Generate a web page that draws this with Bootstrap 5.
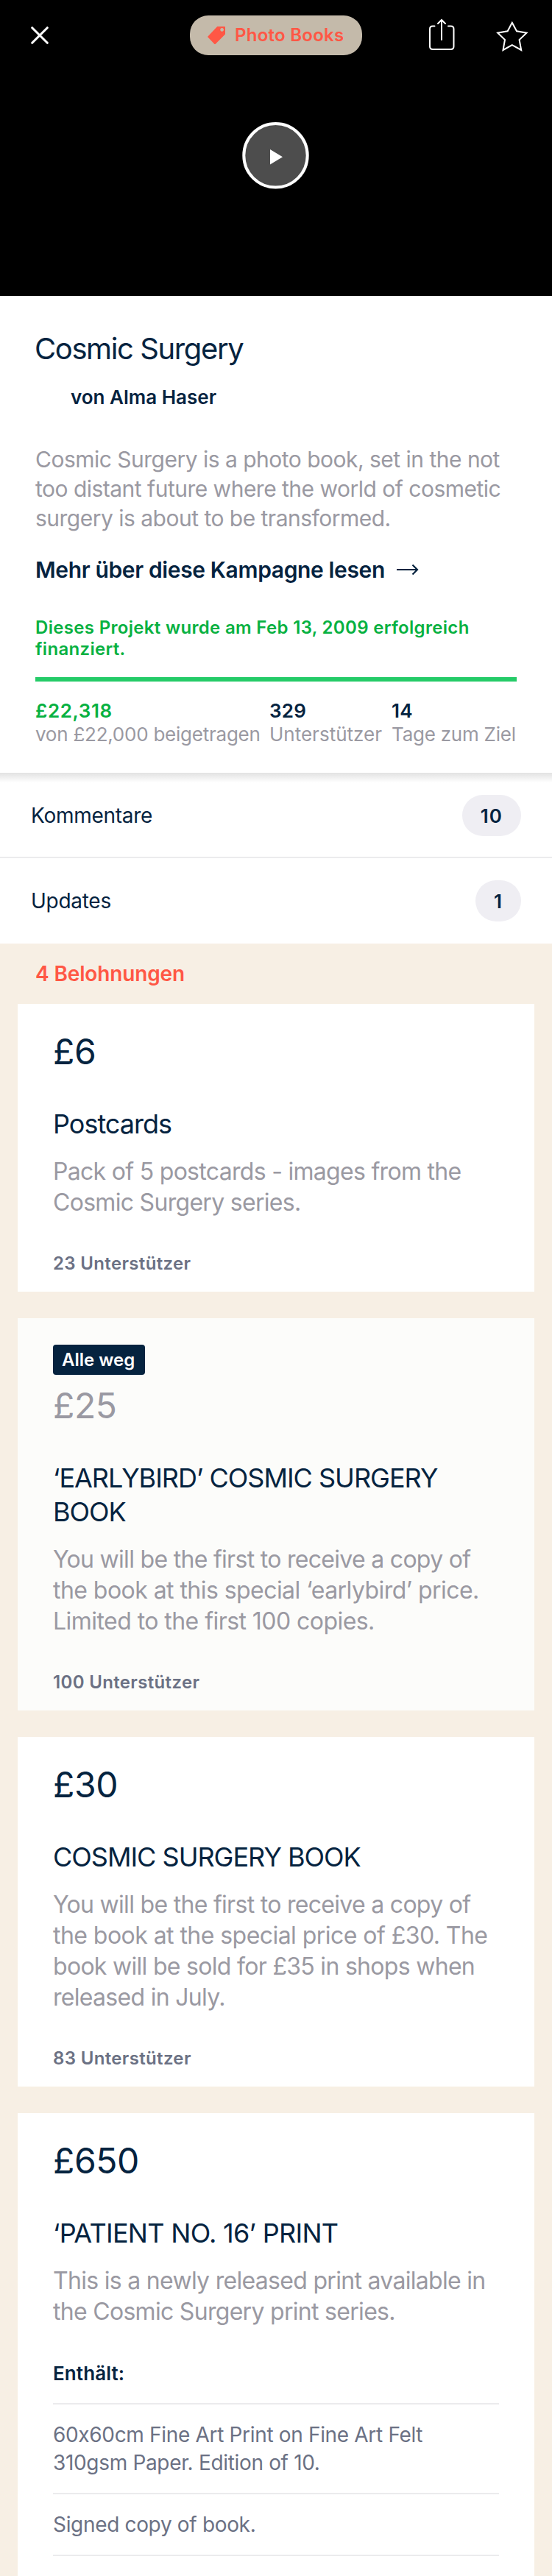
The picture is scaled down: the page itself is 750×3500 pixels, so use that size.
<!DOCTYPE html>
<html lang="de">
<head>
<meta charset="utf-8">
<meta name="viewport" content="width=device-width, initial-scale=1">
<title>Cosmic Surgery</title>
<link href="https://cdn.jsdelivr.net/npm/bootstrap@5.3.0/dist/css/bootstrap.min.css" rel="stylesheet">
<style>
  :root { --navy: #05233f; --soft: #9a99a2; --slate: #6b7184; --coral: #ff5745; --line: #ebebed; }
  body { font-family: Inter, "Liberation Sans", sans-serif; color: var(--navy); height: 3500px; overflow: hidden; background: #f7efe4; font-kerning: normal; }
  p, h1, h2, h3 { margin: 0; font-weight: 400; }
  svg { display: block; }

  .hero { height: 402px; background: #000; }
  .hero-bar { padding: 21px 30px 0; }
  .side { flex: 1 1 0; }
  .close-icon { margin-left: 12px; }
  .category { width: 234px; height: 54px; border-radius: 25px; background: #c4baaa; color: var(--coral); font-size: 24px; font-weight: 600; letter-spacing: .26px; padding-left: 24px; gap: 13px; }
  .play { margin: 91px auto 0; width: 92px; }

  .campaign { padding: 48px 48px 36px; }
  .campaign h1 { font-size: 40px; line-height: 48px; letter-spacing: -1.4px; margin-left: -1px; }
  .author { font-size: 26px; line-height: 32px; font-weight: 600; margin: 26px 0 48px 48px; }
  .blurb { font-size: 30px; line-height: 40px; letter-spacing: -.51px; color: var(--soft); }
  .more { font-size: 30px; line-height: 40px; font-weight: 600; letter-spacing: -.36px; margin-top: 30px; gap: 16px; }
  .success { font-size: 24px; line-height: 29px; font-weight: 600; letter-spacing: .32px; color: #07b141; margin: 44px 0 24px; }
  .funded.progress { height: 6px; border-radius: 0; margin-bottom: 24px; }
  .funded .progress-bar { background: #25cb68; }
  .stats { display: grid; grid-template-columns: 318px 166px auto; font-size: 26px; line-height: 32px; color: var(--soft); white-space: nowrap; }
  .stats strong { display: block; font-weight: 600; color: var(--navy); letter-spacing: .3px; }
  .stats .pledged { color: #07b141; letter-spacing: .6px; }
  .ls-a { letter-spacing: -.24px; }

  .links .entry { height: 116px; padding: 0 42px; font-size: 28px; letter-spacing: -.28px; background: #fff; }
  .links .entry:first-child { border-bottom: 2px solid var(--line); padding-top: 2px; background: linear-gradient(#e2e2e2 0, #f3f3f3 8px, #fff 13px); }
  .count { min-width: 62px; height: 56px; border-radius: 28px; background: #efeef3; font-size: 26px; font-weight: 600; letter-spacing: 1px; padding: 0 25px; }

  .rewards-head { height: 82px; padding: 2px 0 0 48px; font-size: 28px; font-weight: 600; letter-spacing: -.14px; color: var(--coral); }
  .reward { background: #fff; margin: 0 24px 36px; padding: 37px 48px 23px; }
  .reward.gone { background: #fcfcfa; padding-top: 36px; }
  .gone-tag { display: table; height: 41px; line-height: 41px; border-radius: 4px; background: var(--navy); color: #fff; font-size: 24px; font-weight: 600; padding: 0 14px 0 12px; margin-bottom: 14px; }
  .price { font-size: 48px; line-height: 56px; letter-spacing: -.42px; }
  .gone .price { color: var(--soft); }
  .reward h3 { font-size: 36px; line-height: 46px; letter-spacing: -1px; margin: 47px -24px 21px 0; }
  .reward h3.loose { letter-spacing: -.7px; }
  .reward .about { font-size: 32px; line-height: 42px; letter-spacing: -.7px; color: var(--soft); margin-right: -24px; }
  .reward .about .wide { letter-spacing: -.55px; }
  .backers { font-size: 24px; line-height: 30px; font-weight: 600; letter-spacing: .34px; color: var(--slate); margin-top: 47px; }
  .contains { font-size: 26px; line-height: 30px; font-weight: 600; letter-spacing: .1px; margin: 48px 0 25px; }
  .items li { border-top: 2px solid var(--line); padding: 22px 0; font-size: 28px; line-height: 38px; letter-spacing: -.33px; color: var(--slate); }
  .items { border-bottom: 2px solid var(--line); margin: 0; }
</style>
</head>
<body>
<header class="hero">
  <div class="hero-bar d-flex align-items-center">
    <div class="side">
      <svg class="close-icon" width="24" height="24" viewBox="0 0 24 24" fill="none" stroke="#fff" stroke-width="3" stroke-linecap="round"><path d="M1.7 1.7l20.6 20.6M22.3 1.7L1.7 22.3"/></svg>
    </div>
    <div class="category d-flex align-items-center flex-shrink-0">
      <svg width="24" height="24" viewBox="0 0 24 24"><path fill="#ff5745" fill-rule="evenodd" d="M0 14 13.200 0H23q1 0 1 1v9.500L10.500 24H9.500zM19.600 2a2.400 2.400 0 1 0 .01 0z"/></svg>
      <span>Photo Books</span>
    </div>
    <div class="side d-flex justify-content-end">
      <svg width="138" height="46" viewBox="582 25 138 46" fill="none" stroke="#fff" stroke-width="2" stroke-linecap="round">
        <path d="M590.500 35.500H588q-4 0-4 4V63q0 4 4 4h24.500q4 0 4-4V39.500q0-4-4-4H609M600 54V27M595 32l5-5 5 5"/>
        <path stroke-linecap="butt" d="M695.800 30.800 702 42.300 715.500 44.700 705.600 54 708.200 68 695.800 61.200 683.500 68 686 54 676.200 44.700 689.700 42.300z"/>
      </svg>
    </div>
  </div>
  <svg class="play" width="92" height="92" viewBox="0 0 92 92"><circle cx="45.500" cy="45.300" r="43.200" fill="#4d4d4d" stroke="#fff" stroke-width="4"/><path fill="#fff" d="M38 37v20.500L55 47.200z"/></svg>
</header>

<main>
  <section class="campaign bg-white">
    <h1>Cosmic Surgery</h1>
    <p class="author">von Alma Haser</p>
    <p class="blurb">Cosmic Surgery is a photo book, set in the not<br>too distant future where the world of cosmetic<br>surgery is about to be transformed.</p>
    <div class="more d-flex align-items-center">
      <span>Mehr über diese Kampagne lesen</span>
      <svg width="30" height="16" viewBox="0 0 30 16" fill="none" stroke="#05233f" stroke-width="2.200"><path d="M0 8h28M21.500 1.500 28 8l-6.500 6.500"/></svg>
    </div>
    <p class="success">Dieses Projekt wurde am Feb 13, 2009 erfolgreich<br>finanziert.</p>
    <div class="funded progress"><div class="progress-bar w-100"></div></div>
    <div class="stats">
      <div class="ls-a"><strong class="pledged">£22,318</strong>von £22,000 beigetragen</div>
      <div><strong>329</strong>Unterstützer</div>
      <div class="ls-a"><strong>14</strong>Tage zum Ziel</div>
    </div>
  </section>

  <nav class="links">
    <div class="entry d-flex align-items-center justify-content-between"><span>Kommentare</span><span class="count d-flex align-items-center justify-content-center">10</span></div>
    <div class="entry d-flex align-items-center justify-content-between"><span>Updates</span><span class="count d-flex align-items-center justify-content-center">1</span></div>
  </nav>

  <section>
    <h2 class="rewards-head d-flex align-items-center">4 Belohnungen</h2>

    <article class="reward">
      <p class="price">£6</p>
      <h3>Postcards</h3>
      <p class="about">Pack of 5 postcards - images from the<br>Cosmic Surgery series.</p>
      <p class="backers">23 Unterstützer</p>
    </article>

    <article class="reward gone">
      <span class="gone-tag">Alle weg</span>
      <p class="price">£25</p>
      <h3>‘EARLYBIRD’ COSMIC SURGERY<br>BOOK</h3>
      <p class="about">You will be the first to receive a copy of<br><span class="wide">the book at this special ‘earlybird’ price.<br>Limited to the first 100 copies.</span></p>
      <p class="backers">100 Unterstützer</p>
    </article>

    <article class="reward">
      <p class="price">£30</p>
      <h3>COSMIC SURGERY BOOK</h3>
      <p class="about">You will be the first to receive a copy of<br><span class="wide">the book at the special price of £30. The</span><br>book will be sold for £35 in shops when<br>released in July.</p>
      <p class="backers">83 Unterstützer</p>
    </article>

    <article class="reward pb-5 mb-0">
      <p class="price">£650</p>
      <h3 class="loose">‘PATIENT NO. 16’ PRINT</h3>
      <p class="about">This is a newly released print available in<br>the Cosmic Surgery print series.</p>
      <p class="contains">Enthält:</p>
      <ul class="items list-unstyled">
        <li>60x60cm Fine Art Print on Fine Art Felt<br>310gsm Paper. Edition of 10.</li>
        <li>Signed copy of book.</li>
      </ul>
    </article>
  </section>
</main>
<script src="https://cdn.jsdelivr.net/npm/bootstrap@5.3.0/dist/js/bootstrap.bundle.min.js"></script>
</body>
</html>
